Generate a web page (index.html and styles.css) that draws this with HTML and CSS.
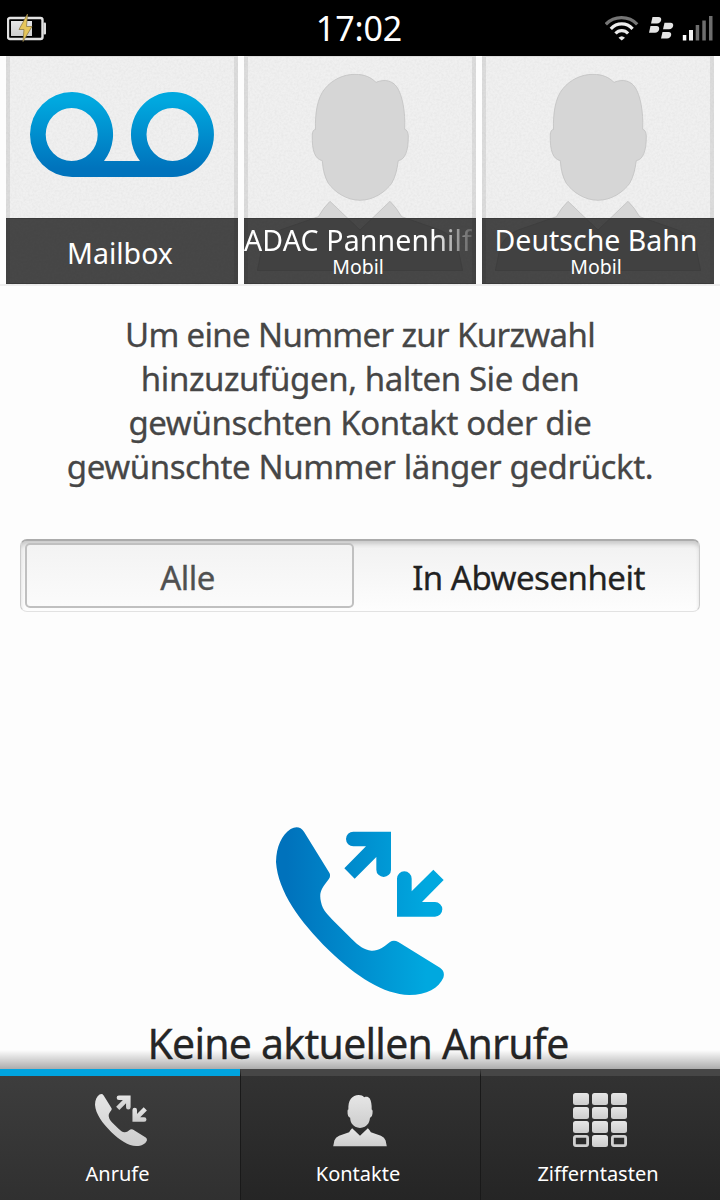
FILE: index.html
```html
<!DOCTYPE html>
<html lang="de">
<head>
    <meta charset="UTF-8">
    <meta name="viewport" content="width=device-width, initial-scale=1.0">
    <title>Telefon</title>
    <link rel="stylesheet" href="styles.css">
</head>
<body>
    <!-- Shared shapes -->
    <svg class="defs" width="0" height="0">
        <defs>
            <linearGradient id="blueDown" x1="0" y1="0" x2="0" y2="1">
                <stop offset="0.1" stop-color="#00a8df"/>
                <stop offset="0.9" stop-color="#0073bc"/>
            </linearGradient>
            <linearGradient id="blueRight" gradientUnits="userSpaceOnUse" x1="80" y1="0" x2="500" y2="0">
                <stop offset="0" stop-color="#0072bc"/>
                <stop offset="1" stop-color="#00a8df"/>
            </linearGradient>
            <linearGradient id="silver" x1="0" y1="0" x2="0" y2="1">
                <stop offset="0" stop-color="#e6e6e6"/>
                <stop offset="1" stop-color="#cdcdcd"/>
            </linearGradient>
            <filter id="grain" x="0" y="0" width="1" height="1">
                <feTurbulence type="fractalNoise" baseFrequency="0.45" numOctaves="2"/>
                <feColorMatrix values="0 0 0 0 0  0 0 0 0 0  0 0 0 0 0  0.06 0 0 0 -0.02"/>
            </filter>
            <symbol id="person" viewBox="13 18 206 197">
                <path d="M68.300 79 Q68.500 73.500 71.500 73.500 C71 58 73 42 81 32.500 C88 24 99 18.300 111 18.300 C121 18.300 127 21.500 132 26.300 C141 22.500 148.500 25 152.700 30.700 C158.500 39 161.500 56 160.700 73.300 Q164 74 164.300 80 C164.500 95 161 103.500 154.300 104.700 C153 114 151.500 120.500 147.700 127.300 C141 136.500 129 144.300 116 144.300 C103 144.300 91 136.500 84.300 127.300 C80.500 120.500 79 114 78.300 104.700 C71 103 67.800 95 68.300 79Z"/>
                <path d="M86 145.300 L116 174 L146 145.300 Q152 151 157.700 160.700 L196 174 Q210 180 214 192 L218.700 214.700 H13.300 L18 192 Q22 180 36 174 L74.300 160.700 Q80 151 86 145.300Z"/>
            </symbol>
            <symbol id="calls" viewBox="48 50 504 504">
                <path d="M92 56 Q117 43 132 64 L207 186 Q214 196 206 207 C186 233 176 245 183 275 C188 300 204 314 224 335 L276 387 C295 406 314 420 334 421 C356 422 370 411 390 395 Q401 388 415 395 L540 472 Q556 483 550 502 C537 532 500 554 448 554 C370 551 290 500 205 418 C120 334 54 244 48 155 C49 108 65 75 92 56Z"/>
                <path d="M280 64 H393 V178 A22 22 0 0 1 349 178 V140 L284 205 L253 174 L318 108 H280 A22 22 0 0 1 280 64Z"/>
                <path d="M411 319 V205 A22 22 0 0 1 455 205 V243 L520 178 L551 209 L486 275 H525 A22 22 0 0 1 525 319Z"/>
            </symbol>
        </defs>
    </svg>

    <div class="phone">
        <div class="statusbar">
            <svg class="battery" width="40" height="30" viewBox="0 0 40 30">
                <rect x="1" y="5" width="34.500" height="21" rx="2" fill="none" stroke="#e2e2e2" stroke-width="2.400"/>
                <rect x="36.500" y="9.500" width="2.500" height="12" rx="1" fill="#ddd"/>
                <rect x="4" y="8" width="21" height="15" fill="url(#silver)"/>
                <path d="M20.500 1 L12 16.500 H17 L16 28.500 L25 13.500 H19.500Z" fill="#e6c65a" stroke="#8d7a45" stroke-width="0.800"/>
            </svg>
            <div class="clock">17:02</div>
            <svg class="signals" width="110" height="30" viewBox="605 13 110 30">
                <g fill="none" stroke-width="3.200">
                    <path d="M605.800 24.300 C614 15.300 629 15.300 637.200 24.300" stroke="#757575"/>
                    <path d="M610.800 28.800 C617 22.300 626.500 22.300 632.600 28.800" stroke="#eee"/>
                    <path d="M615.500 33.500 C619 29.700 624.500 29.700 628.100 33.500" stroke="#e8e8e8"/>
                </g>
                <path d="M618.500 37.800 Q621.700 34.800 625 37.800 L621.700 40.500Z" fill="#e8e8e8"/>
                <g fill="#e4e4e4">
                    <path d="M652.500 17 H658.500 C663 17 661.500 23.500 657 23.500 H651Z"/>
                    <path d="M650.500 26 H656.500 C661 26 659.500 32.800 655 32.800 H649Z"/>
                    <path d="M664.500 22.800 H670.500 C675 22.800 673.500 29.300 669 29.300 H663Z"/>
                    <path d="M662.500 32 H668.500 C673 32 671.500 38.500 667 38.500 H661Z"/>
                </g>
                <rect x="682.800" y="35" width="3.500" height="5.500" fill="#fff"/>
                <rect x="689" y="30" width="4" height="10.500" fill="#f2f2f2"/>
                <rect x="695.700" y="25" width="3.500" height="15.500" fill="#6e6e6e"/>
                <rect x="702.300" y="20.500" width="3.500" height="20" fill="#6e6e6e"/>
                <rect x="709" y="16" width="3.500" height="24.500" fill="#6e6e6e"/>
            </svg>
        </div>

        <!-- Speed dial -->
        <div class="tiles">
            <div class="tile">
                <svg class="grain" width="232" height="228"><rect width="232" height="228" filter="url(#grain)"/></svg>
                <svg class="mailbox" width="184" height="85" viewBox="0 0 184 85">
                    <path fill="url(#blueDown)" fill-rule="evenodd" d="M42 0 A41.500 42.500 0 0 1 74 69 H110 A41.500 42.500 0 1 1 142 85 H42 A42 42.500 0 0 1 42 0Z M41.700 16 A26 26.500 0 1 0 41.700 69 A26 26.500 0 1 0 41.700 16Z M142.500 16 A26 26.500 0 1 0 142.500 69 A26 26.500 0 1 0 142.500 16Z"/>
                </svg>
                <div class="label"><span class="name">Mailbox</span></div>
            </div>
            <div class="tile">
                <svg class="grain" width="232" height="228"><rect width="232" height="228" filter="url(#grain)"/></svg>
                <svg class="avatar" width="206" height="197"><use href="#person"/></svg>
                <div class="label"><span class="name name-long">ADAC Pannenhilf</span><span class="kind">Mobil</span></div>
            </div>
            <div class="tile">
                <svg class="grain" width="232" height="228"><rect width="232" height="228" filter="url(#grain)"/></svg>
                <svg class="avatar" width="206" height="197"><use href="#person"/></svg>
                <div class="label"><span class="name">Deutsche Bahn</span><span class="kind">Mobil</span></div>
            </div>
        </div>

        <div class="content">
            <p class="hint"><span class="tight">Um eine Nummer zur Kurzwahl</span><br>hinzuzufügen, halten Sie den<br>gewünschten Kontakt oder die<br>gewünschte Nummer länger gedrückt.</p>

            <div class="segmented">
                <div class="segment active">Alle</div>
                <div class="segment">In Abwesenheit</div>
            </div>

            <div class="empty">
                <svg class="empty-icon" width="168" height="168"><use href="#calls"/></svg>
                <div class="empty-text">Keine aktuellen Anrufe</div>
            </div>
        </div>

        <div class="tabs">
            <div class="tab active">
                <svg class="tab-icon" width="54" height="54"><use href="#calls" x="2" y="1" width="52" height="52"/></svg>
                <span>Anrufe</span>
            </div>
            <div class="tab">
                <svg class="tab-icon" width="54" height="54"><use href="#person" x="0" y="2" width="54" height="51.500"/></svg>
                <span>Kontakte</span>
            </div>
            <div class="tab">
                <svg class="tab-icon" width="54" height="54">
                    <g>
                        <rect x="0" y="0" width="16" height="12" rx="2.500"/><rect x="19" y="0" width="16" height="12" rx="2.500"/><rect x="38" y="0" width="16" height="12" rx="2.500"/>
                        <rect x="0" y="14" width="16" height="12" rx="2.500"/><rect x="19" y="14" width="16" height="12" rx="2.500"/><rect x="38" y="14" width="16" height="12" rx="2.500"/>
                        <rect x="0" y="28" width="16" height="12" rx="2.500"/><rect x="19" y="28" width="16" height="12" rx="2.500"/><rect x="38" y="28" width="16" height="12" rx="2.500"/>
                        <rect x="19" y="42" width="16" height="12" rx="2.500"/>
                    </g>
                    <rect class="key-outline" x="1.400" y="43.400" width="13.200" height="9.200" rx="1.500"/>
                    <rect class="key-outline" x="39.400" y="43.400" width="13.200" height="9.200" rx="1.500"/>
                </svg>
                <span>Zifferntasten</span>
            </div>
        </div>
    </div>
</body>
</html>
```
FILE: styles.css
```css
body {
    margin: 0;
    background-color: #fdfdfd;
    font-family: "Noto Sans", "Open Sans", sans-serif;
    color: #262626;
    -webkit-text-stroke: 0.3px;
}

.defs {
    display: block;
}

.phone {
    display: flex;
    flex-direction: column;
    width: 720px;
    height: 1200px;
    overflow: hidden;
}

/* Status bar */
.statusbar {
    display: grid;
    grid-template-columns: 1fr auto 1fr;
    align-items: center;
    flex: none;
    height: 56px;
    box-sizing: border-box;
    padding: 0 5px 0 7px;
    background-color: #000;
}

.clock {
    padding-right: 4px;
    color: #fff;
    font-size: 34px;
    line-height: 56px;
    letter-spacing: -0.1px;
    -webkit-text-stroke: 0;
}

.signals {
    justify-self: end;
}

/* Speed dial tiles */
.tiles {
    display: flex;
    flex: none;
    gap: 6px;
    padding: 0 6px;
    border-bottom: 2px solid #eee;
}

.tile {
    position: relative;
    width: 232px;
    height: 228px;
    box-sizing: border-box;
    border: solid #dcdcdc;
    border-width: 1px 4px 0;
    background-color: #f0f0f0;
}

.grain {
    position: absolute;
    left: -4px;
    top: 0;
}

.mailbox {
    position: relative;
    display: block;
    margin: 35px 0 0 20px;
}

.avatar {
    position: relative;
    display: block;
    margin: 17px 0 0 9px;
    fill: #d6d6d6;
    stroke: #bdbdbd;
    stroke-width: 0.7px;
}

.label {
    position: absolute;
    left: -4px;
    right: -4px;
    bottom: 0;
    display: flex;
    flex-direction: column;
    align-items: center;
    justify-content: center;
    box-sizing: border-box;
    height: 66px;
    padding-right: 4px;
    background-color: rgba(20, 20, 20, 0.77);
    box-shadow: inset 0 1px 0 #3a3a3a, inset 0 -1px 0 #3a3a3a;
    color: #fff;
    -webkit-text-stroke: 0;
}

.name {
    padding-top: 4px;
    font-size: 28.5px;
    line-height: 30px;
    white-space: nowrap;
}

.name-long {
    align-self: stretch;
    letter-spacing: 0.15px;
    -webkit-mask-image: linear-gradient(to right, #000 83%, transparent 103%);
    mask-image: linear-gradient(to right, #000 83%, transparent 103%);
}

.kind {
    padding-bottom: 2px;
    font-size: 19.5px;
    line-height: 24px;
}

/* Content */
.content {
    flex: 1;
    min-height: 0;
}

.hint {
    margin: 0;
    padding-top: 27px;
    color: #464646;
    font-size: 33px;
    line-height: 44px;
    letter-spacing: -0.4px;
    text-align: center;
}

.hint .tight {
    letter-spacing: -0.65px;
}

.segmented {
    display: flex;
    box-sizing: border-box;
    height: 73px;
    margin: 50px 20px 0;
    padding: 2px 4px 3px;
    border: 1px solid #ccc;
    border-top: 2px solid #ababab;
    border-bottom-color: #e2e2e2;
    border-radius: 7px;
    background: linear-gradient(to bottom, #f1f1f1, #fdfdfd);
    box-shadow: inset 0 4px 4px -1px #c8c8c8;
}

.segment {
    flex: 1;
    padding-left: 8px;
    color: #222;
    font-size: 33px;
    line-height: 69px;
    letter-spacing: -0.5px;
    text-align: center;
}

.segment.active {
    flex: none;
    width: 321px;
    padding: 0 4px 0 0;
    border: 2px solid #c0c0c0;
    border-radius: 5px;
    background: linear-gradient(to bottom, #f3f3f3, #fbfbfb);
    color: #505050;
    line-height: 65px;
}

.empty {
    display: flex;
    flex-direction: column;
    align-items: center;
    padding-top: 215px;
}

.empty-icon {
    fill: url(#blueRight);
}

.empty-text {
    margin-top: 18px;
    padding-right: 4px;
    font-size: 41px;
    line-height: 60px;
    letter-spacing: -0.75px;
}

/* Bottom tabs */
.tabs {
    position: relative;
    display: grid;
    grid-template-columns: 240px 240px 240px;
    flex: none;
    height: 131px;
    background-color: #262626;
}

/* shade cast on the content above */
.tabs::before {
    content: "";
    position: absolute;
    left: 0;
    right: 0;
    top: -19px;
    height: 19px;
    background: linear-gradient(to bottom, rgba(0, 0, 0, 0), rgba(0, 0, 0, 0.32));
}

.tab {
    display: flex;
    flex-direction: column;
    align-items: center;
    box-sizing: border-box;
    padding-top: 17px;
    padding-right: 5px;
    border-top: 7px solid #464646;
    border-left: 1px solid #191919;
    background: linear-gradient(to bottom, #323232, #252525);
    color: #fff;
    font-size: 20px;
    line-height: 28px;
    -webkit-text-stroke: 0;
}

.tab.active {
    border-top-color: #00a4df;
    border-left: none;
    background: linear-gradient(to bottom, #3d3d3d, #303030);
}

.tab-icon {
    flex: none;
    margin: 0 0 13px 4px;
    fill: url(#silver);
}

.tab-icon .key-outline {
    fill: none;
    stroke: #d0d0d0;
    stroke-width: 2.8px;
}
```
